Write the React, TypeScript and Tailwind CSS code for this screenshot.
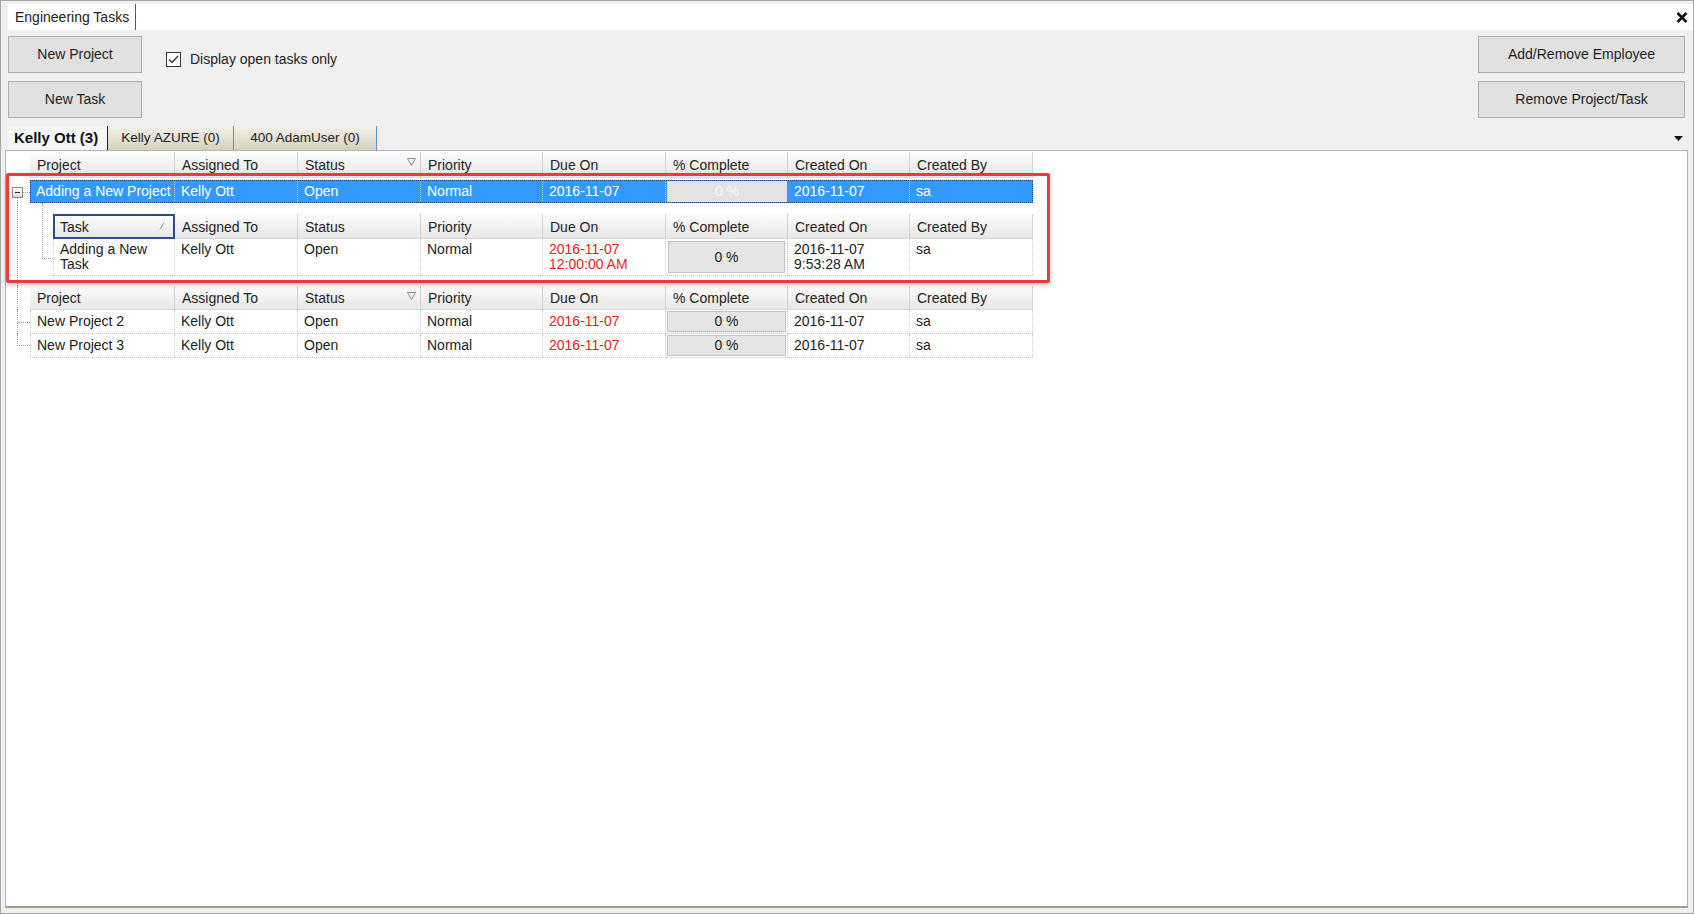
import React from 'react';
import clsx from 'clsx';

const MAIN_W = ['w-[145px]', 'w-[123px]', 'w-[123px]', 'w-[122px]', 'w-[123px]', 'w-[122px]', 'w-[122px]', 'w-[123px]'];
const SUB_W = ['w-[122px]', 'w-[123px]', 'w-[123px]', 'w-[122px]', 'w-[123px]', 'w-[122px]', 'w-[122px]', 'w-[123px]'];
const HEADERS = ['Assigned To', 'Status', 'Priority', 'Due On', '% Complete', 'Created On', 'Created By'];

const dot = 'border-dotted border-[#a3a3a3]';
const cellBorder = 'border-r border-b border-dotted border-[#cacaca]';

interface Project {
  name: string;
  assigned: string;
  status: string;
  priority: string;
  due: string;
  pct: string;
  created: string;
  by: string;
}

const others: Project[] = [
  { name: 'New Project 2', assigned: 'Kelly Ott', status: 'Open', priority: 'Normal', due: '2016-11-07', pct: '0 %', created: '2016-11-07', by: 'sa' },
  { name: 'New Project 3', assigned: 'Kelly Ott', status: 'Open', priority: 'Normal', due: '2016-11-07', pct: '0 %', created: '2016-11-07', by: 'sa' },
];

function FilterGlyph() {
  return (
    <svg width="9" height="8" viewBox="0 0 9 8" className="absolute right-[4px] top-[6px]">
      <path d="M0.5 0.5 H8.5 L4.5 7.5 Z" fill="none" stroke="#8a8a8a" strokeWidth="1" />
    </svg>
  );
}

function HeaderCell({ width, label, filter, focus }: { width: string; label: string; filter?: boolean; focus?: boolean }) {
  return (
    <div
      className={clsx(
        width,
        'relative h-full shrink-0 flex items-center pt-[2px] bg-linear-to-b from-[#fdfdfd] to-[#e7e7e7] text-[#222]',
        focus ? 'border-2 border-[#2d4c8a] pl-[5px]' : 'border-r border-b border-r-[#d2d2d2] border-b-[#d8d8d8] pl-[7px]',
      )}
    >
      {label}
      {filter ? <FilterGlyph /> : null}
      {focus ? (
        <svg width="6" height="8" viewBox="0 0 6 8" className="absolute right-[8px] top-[6px]">
          <path d="M1 7.5 L5 0.5" stroke="#9a9a9a" strokeWidth="1" />
        </svg>
      ) : null}
    </div>
  );
}

function HeaderRow({ first, widths, focusFirst }: { first: string; widths: string[]; focusFirst?: boolean }) {
  return (
    <>
      <HeaderCell width={widths[0]} label={first} focus={focusFirst} />
      {HEADERS.map((h, i) => (
        <HeaderCell key={h} width={widths[i + 1]} label={h} filter={h === 'Status' && !focusFirst} />
      ))}
    </>
  );
}

function Gutter({ kind }: { kind: 'blank' | 'line' | 'tee' | 'end' }) {
  if (kind === 'blank') return <div className="w-[24px] shrink-0" />;
  if (kind === 'line')
    return (
      <div className="w-[24px] shrink-0 pl-[11px]">
        <div className={clsx('h-full border-l', dot)} />
      </div>
    );
  if (kind === 'tee')
    return (
      <div className="w-[24px] shrink-0 pl-[11px]">
        <div className={clsx('h-full border-l flex items-center', dot)}>
          <div className={clsx('w-full border-t', dot)} />
        </div>
      </div>
    );
  return (
    <div className="w-[24px] shrink-0 pl-[11px]">
      <div className={clsx('h-[12px] border-l border-b', dot)} />
    </div>
  );
}

function Cell({ width, children, className }: { width: string; children?: React.ReactNode; className?: string }) {
  return (
    <div className={clsx(width, 'shrink-0 h-full px-[6px] flex items-center whitespace-nowrap overflow-hidden', cellBorder, className)}>
      {children}
    </div>
  );
}

function PctCell({ width, text }: { width: string; text: string }) {
  return (
    <div className={clsx(width, 'shrink-0 h-full p-[1px]', cellBorder)}>
      <div className="h-full flex items-center justify-center bg-[#e5e5e5] border border-[#c4c4c4] text-[#222]">{text}</div>
    </div>
  );
}

function ProjectRow({ p, gutter }: { p: Project; gutter: 'tee' | 'end' }) {
  return (
    <div className="flex h-[24px]">
      <Gutter kind={gutter} />
      <Cell width={MAIN_W[0]} className="border-l">{p.name}</Cell>
      <Cell width={MAIN_W[1]}>{p.assigned}</Cell>
      <Cell width={MAIN_W[2]}>{p.status}</Cell>
      <Cell width={MAIN_W[3]}>{p.priority}</Cell>
      <Cell width={MAIN_W[4]} className="text-[#ee2222]">{p.due}</Cell>
      <PctCell width={MAIN_W[5]} text={p.pct} />
      <Cell width={MAIN_W[6]}>{p.created}</Cell>
      <Cell width={MAIN_W[7]}>{p.by}</Cell>
    </div>
  );
}

function Button({ width, children }: { width: string; children: React.ReactNode }) {
  return (
    <div className={clsx(width, 'h-[37px] bg-[#e1e1e1] border border-[#adadad] flex items-center justify-center text-[#1e1e1e]')}>
      {children}
    </div>
  );
}

export default function App() {
  const blueCell = 'shrink-0 h-full px-[6px] flex items-center whitespace-nowrap overflow-hidden border-r border-dotted border-[#a9d0f8]';
  const subCell = 'shrink-0 h-full px-[6px] pt-[3px] leading-[15px] border-r border-b border-dotted border-[#cacaca]';

  return (
    <div className="w-[1694px] h-[914px] bg-[#f0f0f0] border border-[#a5a5a5] flex flex-col overflow-hidden font-['Liberation_Sans',Arial,sans-serif] text-[14px] text-[#222]">
      {/* window tab strip */}
      <div className="mt-[3px] ml-[7px] h-[26px] bg-white flex items-stretch justify-between">
        <div className="w-[128px] pl-[7px] flex items-center border-r border-[#5a5a5a] text-[#222]">Engineering Tasks</div>
        <div className="flex items-center pr-[5px]">
          <svg width="12" height="11" viewBox="0 0 12 11">
            <path d="M1.5 1 L10.5 10 M10.5 1 L1.5 10" stroke="#111" strokeWidth="2.6" />
          </svg>
        </div>
      </div>

      {/* toolbar */}
      <div className="mt-[6px] pl-[7px] pr-[8px] flex justify-between">
        <div className="flex">
          <div className="flex flex-col gap-[8px]">
            <Button width="w-[134px]">New Project</Button>
            <Button width="w-[134px]">New Task</Button>
          </div>
          <div className="ml-[24px] mt-[13px] h-fit flex items-center gap-[9px]">
            <div className="w-[15px] h-[15px] bg-white border border-[#333] flex items-center justify-center">
              <svg width="11" height="9" viewBox="0 0 11 9">
                <path d="M1 4.5 L4 7.5 L10 1" fill="none" stroke="#333" strokeWidth="1.4" />
              </svg>
            </div>
            <span>Display open tasks only</span>
          </div>
        </div>
        <div className="flex flex-col gap-[8px]">
          <Button width="w-[207px]">Add/Remove Employee</Button>
          <Button width="w-[207px]">Remove Project/Task</Button>
        </div>
      </div>

      {/* employee tabs */}
      <div className="mt-[8px] h-[24px] ml-[7px] mr-[10px] flex items-stretch justify-between">
        <div className="flex items-stretch">
          <div className="w-[100px] pl-[6px] flex items-center font-bold text-[15px] text-[#111] bg-[#f6f6f6] border-r border-[#222]">
            Kelly Ott (3)
          </div>
          <div className="w-[126px] flex items-center justify-center text-[13.5px] bg-linear-to-b from-[#f3f2ea] to-[#d6d1bc] border-r border-[#5c8fdb]">
            Kelly AZURE (0)
          </div>
          <div className="w-[143px] flex items-center justify-center text-[13.5px] bg-linear-to-b from-[#f3f2ea] to-[#d6d1bc] border-r border-[#5c8fdb]">
            400 AdamUser (0)
          </div>
        </div>
        <div className="flex items-center">
          <svg width="9" height="5" viewBox="0 0 9 5">
            <path d="M0 0 H9 L4.5 5 Z" fill="#111" />
          </svg>
        </div>
      </div>

      {/* grid */}
      <div className="ml-[4px] w-[1683px] h-[758px] bg-white border border-[#aab6c3] border-b-2 border-b-[#9e9d88] relative">
        <div className="mt-[1px] flex h-[26px]">
          <Gutter kind="blank" />
          <HeaderRow first="Project" widths={MAIN_W} />
        </div>

        {/* selected row */}
        <div className="mt-[2px] flex h-[23px]">
          <div className="w-[24px] shrink-0 flex flex-col">
            <div className="h-[7px]" />
            <div className="flex items-center">
              <div className="ml-[6px] w-[11px] h-[11px] shrink-0 border border-[#8c8c8c] bg-linear-to-b from-white to-[#d9d9d9] flex items-center justify-center">
                <div className="w-[5px] h-px bg-[#2a2a2a]" />
              </div>
              <div className={clsx('flex-1 border-t', dot)} />
            </div>
            <div className={clsx('flex-1 ml-[11px] border-l', dot)} />
          </div>
          <div className="flex bg-[#3399ff] text-white outline-1 outline-dotted outline-[#1d3f6e] -outline-offset-1">
            <div className={clsx(MAIN_W[0], blueCell)}>Adding a New Project</div>
            <div className={clsx(MAIN_W[1], blueCell)}>Kelly Ott</div>
            <div className={clsx(MAIN_W[2], blueCell)}>Open</div>
            <div className={clsx(MAIN_W[3], blueCell)}>Normal</div>
            <div className={clsx(MAIN_W[4], blueCell)}>2016-11-07</div>
            <div className={clsx(MAIN_W[5], 'shrink-0 h-full py-[1px] px-px')}>
              <div className="h-full flex items-center justify-center bg-[#e3e3e3] text-[#f6f6f6]">0 %</div>
            </div>
            <div className={clsx(MAIN_W[6], blueCell)}>2016-11-07</div>
            <div className={clsx(MAIN_W[7], blueCell, 'border-r-0')}>sa</div>
          </div>
        </div>

        {/* detail view */}
        <div className="flex h-[83px]">
          <Gutter kind="line" />
          <div className="w-[23px] shrink-0 pl-[12px]">
            <div className={clsx('h-[56px] border-l border-b', dot)} />
          </div>
          <div className="flex flex-col pt-[11px]">
            <div className="flex h-[25px]">
              <HeaderRow first="Task" widths={SUB_W} focusFirst />
            </div>
            <div className="flex h-[37px]">
              <div className={clsx(SUB_W[0], subCell, 'border-l')}>
                Adding a New
                <br />
                Task
              </div>
              <div className={clsx(SUB_W[1], subCell)}>Kelly Ott</div>
              <div className={clsx(SUB_W[2], subCell)}>Open</div>
              <div className={clsx(SUB_W[3], subCell)}>Normal</div>
              <div className={clsx(SUB_W[4], subCell, 'text-[#ee2222]')}>
                2016-11-07
                <br />
                12:00:00 AM
              </div>
              <div className={clsx(SUB_W[5], 'shrink-0 h-full p-[2px]', cellBorder)}>
                <div className="h-full flex items-center justify-center bg-[#e5e5e5] border border-[#c4c4c4]">0 %</div>
              </div>
              <div className={clsx(SUB_W[6], subCell)}>
                2016-11-07
                <br />
                9:53:28 AM
              </div>
              <div className={clsx(SUB_W[7], subCell)}>sa</div>
            </div>
          </div>
        </div>

        <div className="flex h-[24px]">
          <Gutter kind="line" />
          <HeaderRow first="Project" widths={MAIN_W} />
        </div>
        <ProjectRow p={others[0]} gutter="tee" />
        <ProjectRow p={others[1]} gutter="end" />

        {/* callout */}
        <div className="absolute left-0 top-[22px] w-[1044px] h-[110px] border-[3px] border-[#ec3a40] rounded-[2px] shadow-[0_2px_4px_rgba(0,0,0,0.25)] pointer-events-none" />
      </div>
    </div>
  );
}
